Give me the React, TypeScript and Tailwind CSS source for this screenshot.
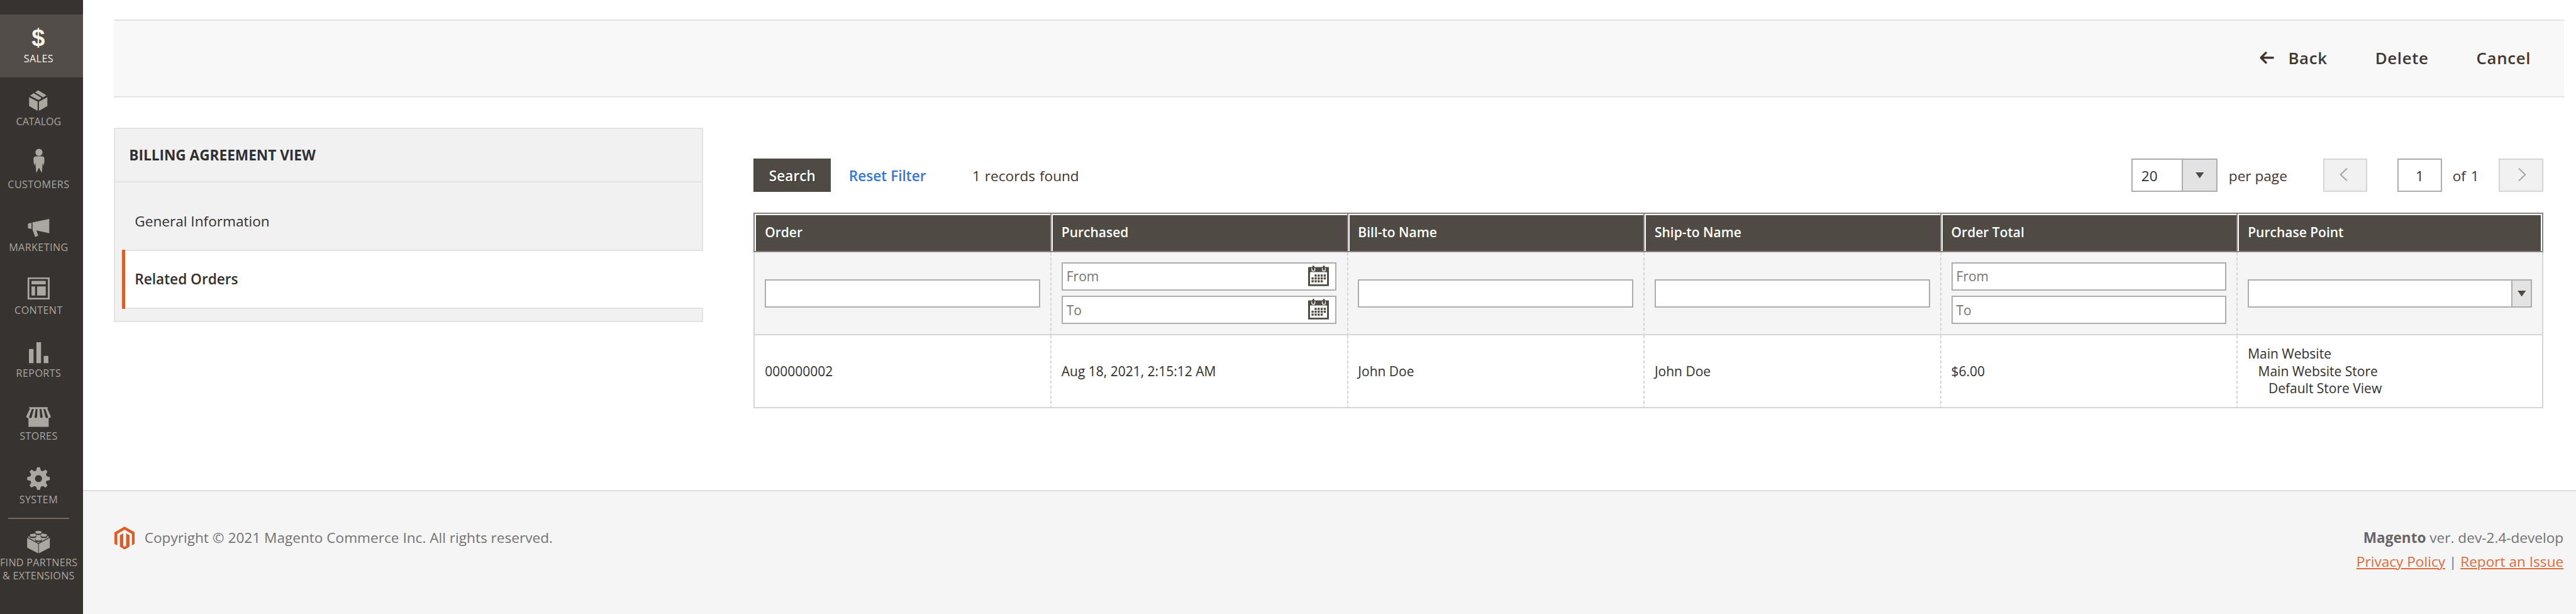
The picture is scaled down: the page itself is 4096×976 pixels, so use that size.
import type { ReactNode } from 'react';

const ICON = '#aaa6a0';
const MENU_BG = '#373330';

function NavIcon({ children }: { children?: ReactNode }) {
  return (
    <svg viewBox="0 0 152 72.8" className="block h-[58.8px] w-[122.8px]" fill={ICON}>
      {children}
    </svg>
  );
}

function NavItem({ label, active, children }: { label: ReactNode; active?: boolean; children?: ReactNode }) {
  return (
    <a
      className={
        active
          ? 'block h-[100.14px] shrink-0 bg-[#524d49] text-[#f7f3eb]'
          : 'block h-[100.14px] shrink-0 text-[#aaa6a0]'
      }
    >
      <NavIcon>{children}</NavIcon>
      <span className="mt-[1.3px] block w-[122.8px] text-center text-[16.15px] leading-[21px] tracking-[0.025em] whitespace-nowrap">
        {label}
      </span>
    </a>
  );
}

function Stud({ x, y }: { x: number; y: number }) {
  return (
    <g transform={`translate(${x} ${y})`}>
      <path d="M-6.6 0V3.2A6.6 2.9 0 0 0 6.6 3.2V0Z" fill={MENU_BG} />
      <path d="M-5.8 0V1.2A5.8 2.3 0 0 0 5.8 1.2V0Z" />
      <ellipse rx="5.8" ry="2.2" />
    </g>
  );
}

function Sidebar() {
  return (
    <nav className="flex h-[976px] w-[132.4px] shrink-0 flex-col overflow-hidden bg-[#373330] pt-[22.6px]">
      <NavItem label="SALES" active>
        <text
          x="75.4"
          y="62.4"
          textAnchor="middle"
          fontFamily="'Liberation Sans', sans-serif"
          fontWeight="700"
          fontSize="47"
          fill="#f7f3eb"
        >
          $
        </text>
      </NavItem>
      <NavItem label={<span className="tracking-[-0.004em]">CATALOG</span>}>
        <path d="M57.3 39L74 47.7V65.9L57.3 56.4ZM76.7 47.7L93.2 39V56.4L76.7 65.9ZM59.3 35.8L66.3 31.1L82 40.6L75.7 44.5ZM69 29.5L75.3 25.5L91.3 35.4L85 39.4Z" />
      </NavItem>
      <NavItem label="CUSTOMERS">
        <circle cx="76.7" cy="23.8" r="7" />
        <path d="M71 31.6H82.5Q87.3 31.6 87.3 36V43L85.7 49.7L84 44.5L82.3 64.4L76.7 54L71.5 64.4L69.5 44.5L67.8 49.7L66 43V36Q66 31.6 71 31.6Z" />
      </NavItem>
      <NavItem label="MARKETING">
        <path d="M55 40.1L62 38.5V50.8L55 49.2ZM64 37.7L97 31V59.1L71.5 53.5L75.3 63.8L69.3 66.6L64 52Z" />
      </NavItem>
      <NavItem label="CONTENT">
        <path fillRule="evenodd" d="M54.3 22.2H97.7V65.6H54.3ZM57.7 25.4V62.4H94.3V25.4Z" />
        <path d="M62 29H90V36H62ZM62 40H69V58H62ZM73 40H90V58H73Z" />
      </NavItem>
      <NavItem label="REPORTS">
        <path d="M57 39.2H66V67.2H57ZM71.7 26H80.8V67.2H71.7ZM86 52.8H95.2V67.2H86Z" />
      </NavItem>
      <NavItem label="STORES">
        <path d="M57.3 30H94.2V32.6H92.8L99.8 47.5Q100 51.5 96.5 51.5H95.8V68.8H56V51.5H55Q51.8 51.5 52 47.5L59 32.6H57.3Z" />
        <g fill={MENU_BG}>
          <path d="M62.8 33.6H66.6L62.6 49A2.6 2.6 0 0 1 57.3 49Z" />
          <path d="M70.2 33.6H73.8L73 49A2.5 2.5 0 0 1 68 49Z" />
          <path d="M78 33.6H81.6L84 49A2.5 2.5 0 0 1 79 49Z" />
          <path d="M85.4 33.6H89.2L94.6 49A2.6 2.6 0 0 1 89.3 49Z" />
        </g>
      </NavItem>
      <NavItem label="SYSTEM">
        <g transform="translate(75.8 46.7)">
          <circle r="11.7" fill="none" stroke={ICON} strokeWidth="9.6" />
          {[0, 45, 90, 135, 180, 225, 270, 315].map((a) => (
            <path key={a} transform={`rotate(${a})`} d="M-2.7 -22.2H2.7L4.8 -15H-4.8Z" />
          ))}
        </g>
      </NavItem>
      <div className="flex h-0 items-end">
        <span className="mb-[-1px] ml-[13px] h-[2px] w-[97px] shrink-0 bg-[#736963]" />
      </div>
      <NavItem
        label={
          <span className="tracking-[0.018em]">
            FIND PARTNERS
            <br />
            &amp; EXTENSIONS
          </span>
        }
      >
        <path d="M54.4 36.9L75.7 25.5L97 36.9L75.7 48.6Z" />
        <path d="M53.4 38.3L75.2 50.2V68.7L53.4 57.7ZM76.5 50.2L98 38.3V57.7L76.5 68.7Z" />
        <Stud x={75.7} y={26.6} />
        <Stud x={64.8} y={32.6} />
        <Stud x={86.5} y={32.6} />
        <Stud x={75.7} y={40.3} />
      </NavItem>
    </nav>
  );
}

function ActionsBar() {
  return (
    <header className="mt-[30.7px] mr-[19.4px] ml-[48.5px] flex h-[124.4px] shrink-0 items-center justify-end border-y-2 border-[#e3e3e3] bg-[#f8f8f8] pb-[2px] text-[25.84px] leading-[34px] font-semibold tracking-[0.025em] text-[#41362f]">
      <svg viewBox="0 0 28.5 24" className="mr-[22px] h-[19.4px] w-[23px]" fill="none" stroke="#41362f" strokeWidth="4.2" strokeLinecap="round" strokeLinejoin="round">
        <path d="M12.3 2.3L2.6 12L12.3 21.7M2.8 12H26.2" />
      </svg>
      <button className="w-[138.3px] text-left">Back</button>
      <button className="w-[160.8px] text-left">Delete</button>
      <button className="w-[139.1px] text-left">Cancel</button>
    </header>
  );
}

function TabsPanel() {
  return (
    <aside className="h-[308.5px] w-[936.8px] shrink-0 border-2 border-[#e3e3e3] bg-[#f1f1f1] text-[22.61px] leading-[30px] text-[#303030]">
      <h2 className="flex h-[85px] items-center border-b-2 border-[#e3e3e3] pt-[1px] pl-[22.4px] font-bold">BILLING AGREEMENT VIEW</h2>
      <div className="flex h-[106.8px] items-center pt-[16.7px] pl-[31.4px]">General Information</div>
      <div className="mr-[-2px] ml-[11px] flex h-[93.7px] border-l-[5px] border-[#de5d27]">
        <div className="flex flex-1 items-center border-y-2 border-[#e3e3e3] bg-white pl-[15.4px] font-semibold">Related Orders</div>
      </div>
    </aside>
  );
}

function Triangle() {
  return (
    <svg viewBox="0 0 14 10" className="h-[9.4px] w-[13.4px]" fill="#4f4a43">
      <path d="M0 0H14L7 10Z" />
    </svg>
  );
}

function Chevron({ next }: { next?: boolean }) {
  return (
    <svg viewBox="0 0 16 26" className="mt-[-3px] h-[21px] w-[13px]" fill="none" stroke="#a6a6a6" strokeWidth="2.6" strokeLinecap="round" strokeLinejoin="round">
      <path d={next ? 'M2 1.5L14 13L2 24.5' : 'M14 1.5L2 13L14 24.5'} />
    </svg>
  );
}

function Toolbar() {
  return (
    <div className="flex h-[53.3px] items-center text-[22.61px] leading-[30px] text-[#41362f]">
      <button className="h-[53.3px] w-[122.9px] bg-[#4f4a43] pt-[2px] text-center font-semibold text-white [text-shadow:1px_1px_1px_rgba(0,0,0,0.5)]">Search</button>
      <a className="ml-[28.6px] w-[196.2px] pt-[2px] font-semibold text-[#3577d5]">Reset Filter</a>
      <span className="flex-1 pt-[2px] [word-spacing:1px]">1 records found</span>
      <div className="flex h-[53.3px] w-[137px] border-2 border-[#adadad] bg-white text-[#303030]">
        <span className="flex flex-1 items-center pt-[2px] pl-[14.2px]">20</span>
        <span className="flex w-[54.5px] items-center justify-center border-l-2 border-[#adadad] bg-[#e3e3e3]">
          <Triangle />
        </span>
      </div>
      <span className="ml-[18.2px] w-[150px] pt-[2px]">per page</span>
      <span className="flex h-[53.3px] w-[70.6px] items-center justify-center border-2 border-[#d6d6d6] bg-[#f1f1f1] pr-[5px]">
        <Chevron />
      </span>
      <span className="ml-[47.3px] flex h-[53.3px] w-[71.3px] items-center justify-center border-2 border-[#adadad] bg-white pt-[2px] text-[#303030]">1</span>
      <span className="ml-[16.7px] w-[73.7px] pt-[2px] [word-spacing:2px]">of 1</span>
      <span className="flex h-[53.3px] w-[70.6px] items-center justify-center border-2 border-[#d6d6d6] bg-[#f1f1f1] pl-[3px]">
        <Chevron next />
      </span>
    </div>
  );
}

const DOTS: [number, number][] = [
  [12.7, 17.7], [18.7, 17.7], [24.7, 17.7], [30.7, 17.7],
  [6.7, 23.3], [12.7, 23.3], [18.7, 23.3], [24.7, 23.3], [30.7, 23.3],
  [6.7, 29], [12.7, 29], [18.7, 29], [24.7, 29],
];

function Calendar() {
  return (
    <svg viewBox="0 0 41 40.7" className="mt-[-1px] mr-[10.6px] h-[32.9px] w-[33.1px]" fill="#4f4a43">
      <path fillRule="evenodd" d="M0 3H41V40.7H0ZM3.7 13V37H37.3V13Z" />
      {[10.3, 31].map((x) => (
        <g key={x}>
          <path d={`M${x - 3} 5V8A3 3 0 0 0 ${x + 3} 8V5`} fill="none" stroke="#fff" strokeWidth="1.6" />
          <path d={`M${x} 2V7`} fill="none" stroke="#4f4a43" strokeWidth="4" strokeLinecap="round" />
        </g>
      ))}
      {DOTS.map(([x, y]) => (
        <rect key={`${x}-${y}`} x={x} y={y} width="4.2" height="4.2" />
      ))}
    </svg>
  );
}

function Field({ hint, calendar }: { hint?: string; calendar?: boolean }) {
  return (
    <div className="flex h-[45.2px] items-center justify-between border-2 border-[#adadad] bg-white pl-[6px] text-[#757575]">
      <span className="pt-[2px]">{hint}</span>
      {calendar && <Calendar />}
    </div>
  );
}

const COLUMNS = ['Order', 'Purchased', 'Bill-to Name', 'Ship-to Name', 'Order Total', 'Purchase Point'];

function BodyCell({ index, children }: { index: number; children: ReactNode }) {
  return (
    <div className="flex">
      {index === 0 ? (
        <span className="w-[2px] bg-[#d6d6d6]" />
      ) : (
        <span className="w-[2px] bg-[repeating-linear-gradient(to_bottom,#d6d6d6_0px,#d6d6d6_5px,transparent_5px,transparent_8px)]" />
      )}
      <div className="flex flex-1 flex-col justify-center gap-[8.1px] pr-[16.2px] pl-[15.8px]">{children}</div>
      {index === 5 && <span className="w-[2px] bg-[#d6d6d6]" />}
    </div>
  );
}

function OrdersGrid() {
  const single = (
    <div className="pt-[2px]">
      <Field />
    </div>
  );
  const filters: ReactNode[] = [
    single,
    <>
      <Field hint="From" calendar />
      <Field hint="To" calendar />
    </>,
    single,
    single,
    <>
      <Field hint="From" />
      <Field hint="To" />
    </>,
    <div className="mt-[2px] mr-[-0.5px] flex h-[45.2px] border-2 border-[#adadad] bg-white">
      <span className="flex-1" />
      <span className="flex w-[31.5px] items-center justify-center border-l-2 border-[#adadad] bg-[#e3e3e3]">
        <Triangle />
      </span>
    </div>,
  ];
  const values: ReactNode[] = [
    '000000002',
    'Aug 18, 2021, 2:15:12 AM',
    'John Doe',
    'John Doe',
    '$6.00',
    <div>
      <div>Main Website</div>
      <div className="pl-[16.4px]">Main Website Store</div>
      <div className="pl-[32.8px]">Default Store View</div>
    </div>,
  ];
  return (
    <div className="mt-[32.3px] text-[21px] leading-[27.4px] text-[#303030]">
      <div className="grid h-[63px] grid-cols-[471.6px_471.6px_471.6px_471.6px_471.6px_487.6px] border-y-2 border-[#8a837f] bg-[#4f4a43] font-semibold text-white">
        {COLUMNS.map((name, i) => (
          <div key={name} className={i === 5 ? 'flex border-x-2 border-[#8a837f]' : 'flex border-l-2 border-[#8a837f]'}>
            <div
              className={
                i === 5
                  ? 'flex flex-1 items-center border-x-2 border-t-2 border-white pb-[1.6px] pl-[13.8px]'
                  : 'flex flex-1 items-center border-t-2 border-l-2 border-white pb-[1.6px] pl-[13.8px]'
              }
            >
              {name}
            </div>
          </div>
        ))}
      </div>
      <div className="grid h-[132.4px] grid-cols-[471.6px_471.6px_471.6px_471.6px_471.6px_487.6px] border-b-2 border-[#d6d6d6] bg-[#f5f5f5]">
        {filters.map((f, i) => (
          <BodyCell key={i} index={i}>{f}</BodyCell>
        ))}
      </div>
      <div className="grid h-[116.3px] grid-cols-[471.6px_471.6px_471.6px_471.6px_471.6px_487.6px] border-b-2 border-[#d6d6d6] bg-white">
        {values.map((v, i) => (
          <BodyCell key={i} index={i}>
            <div className="pt-[1px]">{v}</div>
          </BodyCell>
        ))}
      </div>
    </div>
  );
}

function Footer() {
  return (
    <footer className="flex h-[197.5px] justify-between border-t-2 border-[#dedede] bg-[#f5f5f5] pt-[56.3px] pr-[19.8px] pl-[49.6px] text-[22.61px] text-[#737373]">
      <div className="flex items-start">
        <svg viewBox="0 0 120 136" className="h-[36.6px] w-[32.3px]" fill="#de5d27">
          <path d="M60 0L120 34V102L103 111.5V44L60 19L17 44V111.5L0 102V34Z" />
          <path d="M32 51L52 40V114L60 119L69 114V40L89 51V119L60 136L32 119Z" />
        </svg>
        <p className="ml-[15.5px] pt-[3px] leading-[30px]">Copyright © 2021 Magento Commerce Inc. All rights reserved.</p>
      </div>
      <div className="text-right leading-[38.5px]">
        <p className="mt-[-1.3px]">
          <strong className="font-bold text-[#666]">Magento</strong> ver. dev-2.4-develop
        </p>
        <p>
          <a className="text-[#df6b3a] underline decoration-2 underline-offset-[2px]">Privacy Policy</a> |{' '}
          <a className="text-[#df6b3a] underline decoration-2 underline-offset-[2px]">Report an Issue</a>
        </p>
      </div>
    </footer>
  );
}

export default function App() {
  return (
    <div className="flex h-[976px] w-[4096px] overflow-hidden bg-white font-['Open_Sans','Noto_Sans',sans-serif]">
      <Sidebar />
      <div className="flex flex-1 flex-col">
        <ActionsBar />
        <main className="mt-[48.4px] ml-[48.5px] flex flex-1 items-start">
          <TabsPanel />
          <section className="mt-[48.5px] ml-[80.7px] w-[2845.6px] shrink-0">
            <Toolbar />
            <OrdersGrid />
          </section>
        </main>
        <Footer />
      </div>
    </div>
  );
}
